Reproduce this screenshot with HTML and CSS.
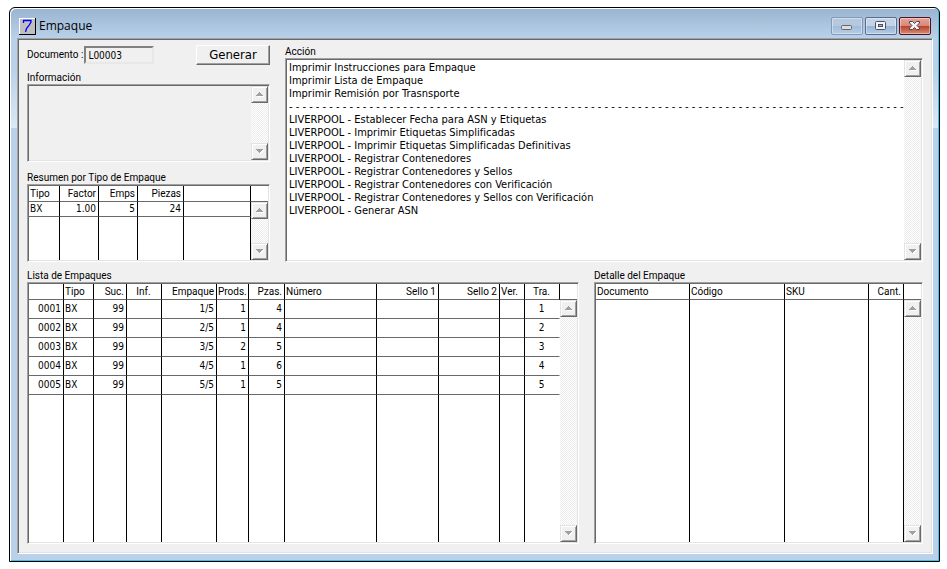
FILE: index.html
```html
<!DOCTYPE html>
<html lang="es">
<head>
    <meta charset="UTF-8">
    <meta name="viewport" content="width=device-width, initial-scale=1.0">
    <title>Empaque</title>
    <link rel="stylesheet" href="styles.css">
</head>
<body>

    <div class="window">
        <header class="title-bar">
            <svg class="app-icon" width="17" height="17" viewBox="0 0 17 17" shape-rendering="crispEdges">
                <rect width="17" height="17" fill="#000"/>
                <rect width="16" height="16" fill="#fff"/>
                <rect x="1" y="1" width="15" height="15" fill="#c0c0c0"/>
                <path d="M4.5 5V2.500H12V4L10 7.500L7.500 10.500L6.500 14" fill="none" stroke="#0000ff" stroke-width="1.300" shape-rendering="auto"/>
            </svg>
            <h1>Empaque</h1>
            <div class="window-buttons">
                <button type="button" class="caption-button minimize" aria-label="Minimizar">
                    <svg width="30" height="16" viewBox="0 0 30 16"><rect x="9.500" y="7.500" width="10" height="4" rx="1" fill="#ddd" stroke="#666"/></svg>
                </button>
                <button type="button" class="caption-button" aria-label="Maximizar">
                    <svg width="30" height="16" viewBox="0 0 30 16"><rect x="9.500" y="3.500" width="10" height="8" rx="1" fill="#f4f4f4" stroke="#4a5068"/><rect x="12.500" y="6.500" width="4" height="2" fill="#9fb8d6" stroke="#4a5068"/></svg>
                </button>
                <button type="button" class="caption-button close" aria-label="Cerrar">
                    <svg width="30" height="16" viewBox="0 0 30 16"><path d="M9.500 3.500H12.500L14.500 5.500L16.500 3.500H19.500V5L17 7.500L19.500 10V11.500H16.500L14.500 9.500L12.500 11.500H9.500V10L12 7.500L9.500 5z" fill="#f4f4f4" stroke="#53404a"/></svg>
                </button>
            </div>
        </header>

        <main class="client">
            <div class="top-row">
                <div class="left-column">
                    <div class="document-row">
                        <label for="documento">Documento :</label>
                        <input type="text" id="documento" value="L00003" readonly>
                        <button type="button" class="generate-button">Generar</button>
                    </div>

                    <label class="caption" for="informacion">Información</label>
                    <div class="sunken info-box">
                        <textarea id="informacion" readonly></textarea>
                        <div class="scrollbar">
                            <button type="button" aria-label="Subir"><svg width="9" height="5" viewBox="0 0 9 5" shape-rendering="crispEdges"><path d="M4 0h1v1h1v1h1v1h1v1H1V3h1V2h1V1h1z"/></svg></button>
                            <button type="button" aria-label="Bajar"><svg width="9" height="5" viewBox="0 0 9 5" shape-rendering="crispEdges"><path d="M1 0h7v1H7v1H6v1H5v1H4V3H3V2H2V1H1z"/></svg></button>
                        </div>
                    </div>

                    <h2 class="caption" id="resumen-title">Resumen por Tipo de Empaque</h2>
                    <div class="sunken grid-box summary">
                        <table aria-labelledby="resumen-title">
                            <colgroup>
                                <col class="w31"><col class="w39"><col class="w39"><col class="w46"><col>
                            </colgroup>
                            <thead>
                                <tr><th>Tipo</th><th class="num">Factor</th><th class="num">Emps</th><th class="num">Piezas</th><th></th></tr>
                            </thead>
                            <tbody>
                                <tr><td>BX</td><td class="num">1.00</td><td class="num">5</td><td class="num">24</td><td></td></tr>
                                <tr class="filler"><td></td><td></td><td></td><td></td><td></td></tr>
                            </tbody>
                        </table>
                        <div class="scrollbar">
                            <button type="button" aria-label="Subir"><svg width="9" height="5" viewBox="0 0 9 5" shape-rendering="crispEdges"><path d="M4 0h1v1h1v1h1v1h1v1H1V3h1V2h1V1h1z"/></svg></button>
                            <button type="button" aria-label="Bajar"><svg width="9" height="5" viewBox="0 0 9 5" shape-rendering="crispEdges"><path d="M1 0h7v1H7v1H6v1H5v1H4V3H3V2H2V1H1z"/></svg></button>
                        </div>
                    </div>
                </div>

                <div class="action-column">
                    <label class="caption" for="accion">Acción</label>
                    <div class="sunken action-box">
                        <select id="accion" size="12">
                            <option>Imprimir Instrucciones para Empaque</option>
                            <option>Imprimir Lista de Empaque</option>
                            <option>Imprimir Remisión por Trasnsporte</option>
                            <option disabled>- - - - - - - - - - - - - - - - - - - - - - - - - - - - - - - - - - - - - - - - - - - - - - - - - - - - - - - - - - - - - - - - - - - - - - - - - - - - - - - - - - - - - - - - - - - -</option>
                            <option>LIVERPOOL - Establecer Fecha para ASN y Etiquetas</option>
                            <option>LIVERPOOL - Imprimir Etiquetas Simplificadas</option>
                            <option>LIVERPOOL - Imprimir Etiquetas Simplificadas Definitivas</option>
                            <option>LIVERPOOL - Registrar Contenedores</option>
                            <option>LIVERPOOL - Registrar Contenedores y Sellos</option>
                            <option>LIVERPOOL - Registrar Contenedores con Verificación</option>
                            <option>LIVERPOOL - Registrar Contenedores y Sellos con Verificación</option>
                            <option>LIVERPOOL - Generar ASN</option>
                        </select>
                        <div class="scrollbar">
                            <button type="button" aria-label="Subir"><svg width="9" height="5" viewBox="0 0 9 5" shape-rendering="crispEdges"><path d="M4 0h1v1h1v1h1v1h1v1H1V3h1V2h1V1h1z"/></svg></button>
                            <button type="button" aria-label="Bajar"><svg width="9" height="5" viewBox="0 0 9 5" shape-rendering="crispEdges"><path d="M1 0h7v1H7v1H6v1H5v1H4V3H3V2H2V1H1z"/></svg></button>
                        </div>
                    </div>
                </div>
            </div>

            <div class="bottom-row">
                <section>
                    <h2 class="caption" id="lista-title">Lista de Empaques</h2>
                    <div class="sunken grid-box packages">
                        <table aria-labelledby="lista-title">
                            <colgroup>
                                <col class="w35"><col class="w30"><col class="w33"><col class="w35"><col class="w55"><col class="w32"><col class="w36"><col><col class="w62"><col class="w61"><col class="w25"><col class="w35">
                            </colgroup>
                            <thead>
                                <tr>
                                    <th></th><th>Tipo</th><th class="num">Suc.</th><th class="mid">Inf.</th><th class="num">Empaque</th><th>Prods.</th><th class="num">Pzas.</th><th>Número</th><th class="num">Sello 1</th><th class="num">Sello 2</th><th>Ver.</th><th class="mid">Tra.</th>
                                </tr>
                            </thead>
                            <tbody>
                                <tr><td class="num">0001</td><td>BX</td><td class="num">99</td><td></td><td class="num">1/5</td><td class="num">1</td><td class="num">4</td><td></td><td></td><td></td><td></td><td class="mid">1</td></tr>
                                <tr><td class="num">0002</td><td>BX</td><td class="num">99</td><td></td><td class="num">2/5</td><td class="num">1</td><td class="num">4</td><td></td><td></td><td></td><td></td><td class="mid">2</td></tr>
                                <tr><td class="num">0003</td><td>BX</td><td class="num">99</td><td></td><td class="num">3/5</td><td class="num">2</td><td class="num">5</td><td></td><td></td><td></td><td></td><td class="mid">3</td></tr>
                                <tr><td class="num">0004</td><td>BX</td><td class="num">99</td><td></td><td class="num">4/5</td><td class="num">1</td><td class="num">6</td><td></td><td></td><td></td><td></td><td class="mid">4</td></tr>
                                <tr><td class="num">0005</td><td>BX</td><td class="num">99</td><td></td><td class="num">5/5</td><td class="num">1</td><td class="num">5</td><td></td><td></td><td></td><td></td><td class="mid">5</td></tr>
                                <tr class="filler"><td></td><td></td><td></td><td></td><td></td><td></td><td></td><td></td><td></td><td></td><td></td><td></td></tr>
                            </tbody>
                        </table>
                        <div class="scrollbar">
                            <button type="button" aria-label="Subir"><svg width="9" height="5" viewBox="0 0 9 5" shape-rendering="crispEdges"><path d="M4 0h1v1h1v1h1v1h1v1H1V3h1V2h1V1h1z"/></svg></button>
                            <button type="button" aria-label="Bajar"><svg width="9" height="5" viewBox="0 0 9 5" shape-rendering="crispEdges"><path d="M1 0h7v1H7v1H6v1H5v1H4V3H3V2H2V1H1z"/></svg></button>
                        </div>
                    </div>
                </section>

                <section>
                    <h2 class="caption" id="detalle-title">Detalle del Empaque</h2>
                    <div class="sunken grid-box detail">
                        <table aria-labelledby="detalle-title">
                            <colgroup>
                                <col class="w94"><col class="w95"><col><col class="w35">
                            </colgroup>
                            <thead>
                                <tr><th>Documento</th><th>Código</th><th>SKU</th><th class="num">Cant.</th></tr>
                            </thead>
                            <tbody>
                                <tr class="filler"><td></td><td></td><td></td><td></td></tr>
                            </tbody>
                        </table>
                        <div class="scrollbar">
                            <button type="button" aria-label="Subir"><svg width="9" height="5" viewBox="0 0 9 5" shape-rendering="crispEdges"><path d="M4 0h1v1h1v1h1v1h1v1H1V3h1V2h1V1h1z"/></svg></button>
                            <button type="button" aria-label="Bajar"><svg width="9" height="5" viewBox="0 0 9 5" shape-rendering="crispEdges"><path d="M1 0h7v1H7v1H6v1H5v1H4V3H3V2H2V1H1z"/></svg></button>
                        </div>
                    </div>
                </section>
            </div>
        </main>
    </div>

</body>
</html>
```
FILE: styles.css
```css
* {
    box-sizing: border-box;
}

body {
    margin: 0;
    padding: 7px 7px 7px 9px;
    height: 100vh;
    display: flex;
    background-color: #ffffff;
    color: #000;
    font-family: "DejaVu Sans Condensed", "DejaVu Sans", sans-serif;
    font-size: 10px;
    line-height: 12px;
}

h1,
h2,
label {
    margin: 0;
    font-weight: normal;
}

button,
input,
select,
textarea {
    margin: 0;
    font: inherit;
    color: inherit;
    border-radius: 0;
    outline: none;
}

/* window frame */

.window {
    flex: 1;
    display: flex;
    flex-direction: column;
    min-width: 0;
    padding: 0 6px 7px 7px;
    border: 1px solid #000;
    border-radius: 6px 6px 0 0;
    background: linear-gradient(#99b4d1, #b9d1ea 30px, #b9d1ea 60px, #dbe8f6 120px, #b9d1ea 120px);
    box-shadow: inset 1px 1px #fff, inset -1px -1px #33c8e8;
}

.title-bar {
    display: flex;
    align-items: center;
    height: 30px;
    padding: 6px 2px 0 2px;
}

.title-bar h1 {
    flex: 1;
    padding-left: 3px;
    font-family: "Open Sans", "Noto Sans", sans-serif;
    font-size: 12px;
    line-height: 16px;
}

.window-buttons {
    display: flex;
    gap: 2px;
}

.caption-button {
    display: block;
    width: 32px;
    height: 18px;
    padding: 0;
    border: 1px solid #5a6b8c;
    border-radius: 2px;
    background: linear-gradient(#c3d4e8 50%, #98b4d2 50%, #b4cce6);
    box-shadow: inset 0 0 0 1px rgba(255, 255, 255, 0.4);
}

.caption-button svg {
    display: block;
}

.minimize {
    border-color: #8499b8;
    background: linear-gradient(#b4c9e0 50%, #a2bcd8 50%, #b4cce6);
}

.close {
    border-color: #4b1220;
    background: linear-gradient(#e5a49a, #d98578 50%, #b8402c 50%, #d88a70);
}

.client {
    flex: 1;
    display: flex;
    flex-direction: column;
    gap: 8px;
    min-height: 0;
    padding: 6px 9px 9px;
    background-color: #f0f0f0;
    border: 1px solid;
    border-color: #a0a0a0 #fff #fff #a0a0a0;
    box-shadow: inset 1px 1px #696969, inset -1px -1px #e3e3e3;
}

/* shared pieces */

.caption,
.document-row label,
th {
    font-family: Roboto, "Liberation Sans", sans-serif;
    font-size: 10px;
    line-height: 12px;
}

.caption {
    display: block;
    height: 12px;
}

.sunken {
    display: flex;
    position: relative;
    background-color: #fff;
    border: 1px solid;
    border-color: #a0a0a0 #fff #fff #a0a0a0;
    box-shadow: inset 1px 1px #696969, inset -1px -1px #e3e3e3;
    padding: 1px;
}

.scrollbar {
    flex: none;
    display: flex;
    flex-direction: column;
    justify-content: space-between;
    width: 17px;
    background: repeating-conic-gradient(#fff 0 25%, #ececec 0 50%) 0 0 / 2px 2px;
}

.scrollbar button {
    display: grid;
    place-items: center;
    width: 17px;
    height: 17px;
    padding: 0;
    background-color: #f0f0f0;
    border: 1px solid;
    border-color: #e3e3e3 #696969 #696969 #e3e3e3;
    box-shadow: inset 1px 1px #fff, inset -1px -1px #a0a0a0;
}

.scrollbar svg {
    fill: #a0a0a0;
    filter: drop-shadow(1px 1px #fff);
}

/* top half */

.top-row {
    display: grid;
    grid-template-columns: 243px 1fr;
    gap: 15px;
}

.document-row {
    display: flex;
    align-items: center;
    height: 20px;
    margin-bottom: 7px;
}

.document-row input {
    width: 70px;
    height: 18px;
    margin: 0 auto 0 1px;
    padding: 0 2px;
    background-color: #f0f0f0;
    border: 2px solid;
    border-color: #808080 #e8e8e8 #e8e8e8 #808080;
}

.generate-button {
    width: 74px;
    height: 20px;
    padding: 0;
    background-color: #f0f0f0;
    border: 1px solid;
    border-color: #fff #696969 #696969 #fff;
    box-shadow: inset -1px -1px #a0a0a0;
    font-size: 13px;
    line-height: 16px;
}

.info-box {
    height: 78px;
    margin-bottom: 10px;
    background-color: #f0f0f0;
}

.info-box textarea {
    flex: 1;
    min-width: 0;
    padding: 2px;
    border: 0;
    background: none;
    resize: none;
}

.summary {
    height: 78px;
}

.action-column {
    display: flex;
    flex-direction: column;
    padding-top: 1px;
    min-width: 0;
}

.action-box {
    flex: 1;
    min-height: 0;
}

.action-box select {
    flex: 1;
    min-width: 0;
    padding: 1px 2px;
    border: 0;
    background: none;
    overflow: hidden;
    font-size: 11px;
}

.action-box option {
    height: 13px;
    min-height: 13px;
    padding: 0;
    line-height: 13px;
    color: #000;
}

/* grids */

.bottom-row {
    flex: 1;
    display: grid;
    grid-template-columns: minmax(0, 1fr) 329px;
    gap: 15px;
    min-height: 0;
}

.bottom-row section {
    display: flex;
    flex-direction: column;
    min-height: 0;
}

.bottom-row .grid-box {
    flex: 1;
    min-height: 0;
}

.grid-box table {
    flex: 1;
    width: 100%;
    height: 100%;
    table-layout: fixed;
    border-collapse: separate;
    border-spacing: 0;
}

.grid-box .scrollbar {
    margin-top: 16px;
}

/* header line runs on over the scrollbar */
.grid-box::after {
    content: "";
    position: absolute;
    top: 16px;
    right: 1px;
    width: 17px;
    height: 1px;
    background-color: #696969;
}

th,
td {
    padding: 0 2px 0 1px;
    border-right: 1px solid #000;
    border-bottom: 1px solid #696969;
    font-weight: normal;
    text-align: left;
    white-space: nowrap;
    line-height: 12px;
}

th {
    height: 16px;
}

td {
    height: 19px;
}

.summary td {
    height: 15px;
}

.grid-box .filler td {
    height: auto;
    border-bottom: 0;
}

.packages td:last-child {
    border-right-color: #fff;
}

.num {
    text-align: right;
}

.mid {
    text-align: center;
}

.w25 { width: 25px; }
.w30 { width: 30px; }
.w31 { width: 31px; }
.w32 { width: 32px; }
.w33 { width: 33px; }
.w35 { width: 35px; }
.w36 { width: 36px; }
.w39 { width: 39px; }
.w46 { width: 46px; }
.w55 { width: 55px; }
.w61 { width: 61px; }
.w62 { width: 62px; }
.w94 { width: 94px; }
.w95 { width: 95px; }
```
